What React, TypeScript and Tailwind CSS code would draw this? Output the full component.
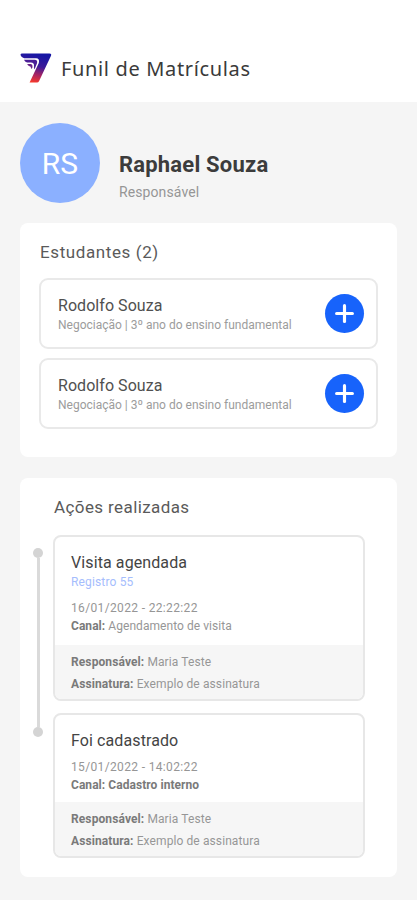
import { Plus } from 'lucide-react';

interface Student {
  id: number;
  name: string;
  info: string;
}

interface Action {
  id: number;
  title: string;
  record?: string;
  date: string;
  channel: string;
  strongChannel?: boolean;
  owner: string;
  signature: string;
}

const students: Student[] = [
  { id: 1, name: 'Rodolfo Souza', info: 'Negociação | 3º ano do ensino fundamental' },
  { id: 2, name: 'Rodolfo Souza', info: 'Negociação | 3º ano do ensino fundamental' },
];

const actions: Action[] = [
  {
    id: 1,
    title: 'Visita agendada',
    record: 'Registro 55',
    date: '16/01/2022 - 22:22:22',
    channel: 'Agendamento de visita',
    owner: 'Maria Teste',
    signature: 'Exemplo de assinatura',
  },
  {
    id: 2,
    title: 'Foi cadastrado',
    date: '15/01/2022 - 14:02:22',
    channel: 'Cadastro interno',
    strongChannel: true,
    owner: 'Maria Teste',
    signature: 'Exemplo de assinatura',
  },
];

function Logo() {
  return (
    <svg width="32" height="30" viewBox="0 0 32 30" fill="none">
      <defs>
        <linearGradient id="logo" x1="20" y1="2" x2="14" y2="30" gradientUnits="userSpaceOnUse">
          <stop offset="0" stopColor="#1616a4" />
          <stop offset="0.4" stopColor="#3d1a98" />
          <stop offset="0.7" stopColor="#a82462" />
          <stop offset="1" stopColor="#fb3a28" />
        </linearGradient>
      </defs>
      <path d="M2 0.5H29.5Q31.8 0.5 31 2.8L19 28.2Q18.4 29.5 17 29.5H9.6L18.8 10Q20 5.4 16 5.2H4.2Q0.8 4.2 0.5 1.5Q0.8 0.5 2 0.5Z" fill="url(#logo)" />
      <path d="M4 6.7H14.6Q18 7 17 10.2L14.6 16.2Q13.6 15.4 14 13.2Q14.4 9.6 10.8 9.5H7Q4.8 9 4 6.7Z" fill="#4a1d96" />
      <path d="M7.2 11H10.4Q13 11.2 12.4 14.4Q12 15.6 11.2 15.8Q11.2 13.2 9 13.1Q7.8 12.5 7.2 11Z" fill="#6a2488" />
    </svg>
  );
}

function StudentCard({ student }: { student: Student }) {
  return (
    <div className="flex h-[71px] items-center justify-between rounded-[9px] border-2 border-[#e9e9e9] pl-[17px] pr-3">
      <div className="whitespace-nowrap pt-[2px]">
        <p className="text-[16px] leading-5 tracking-[0.05px] text-[#505050]">{student.name}</p>
        <p className="text-[12px] leading-[18px] text-[#9c9c9c]">{student.info}</p>
      </div>
      <button className="flex h-[39px] w-[39px] items-center justify-center rounded-full bg-[#1763fb] text-white">
        <Plus className="h-[27px] w-[27px]" strokeWidth={2.8} />
      </button>
    </div>
  );
}

function ActionCard({ action }: { action: Action }) {
  return (
    <div className="overflow-hidden whitespace-nowrap rounded-[8px] border-2 border-[#e7e7e7] text-[12px] text-[#969696]">
      <div className={`px-4 pt-[15px] ${action.record ? 'h-[108px]' : 'h-[87px]'}`}>
        <h3 className="text-[16px] leading-[22px] tracking-[0.1px] text-[#444444]">{action.title}</h3>
        {action.record && <p className="leading-4 tracking-[0.15px] text-[#a5bdfd]">{action.record}</p>}
        <p className={`leading-[18px] tracking-[0.35px] ${action.record ? 'mt-[9px]' : 'mt-[6px]'}`}>{action.date}</p>
        <p className="leading-[18px] tracking-[0.05px]">
          <span className="font-bold text-[#7a7a7a]">Canal:</span>{' '}
          <span className={action.strongChannel ? 'font-bold text-[#7a7a7a]' : ''}>{action.channel}</span>
        </p>
      </div>
      <div className="h-[54px] bg-[#f6f6f6] px-4 pt-[6px] leading-[22px] tracking-[0.1px]">
        <p><span className="font-bold text-[#7a7a7a]">Responsável:</span> {action.owner}</p>
        <p><span className="font-bold text-[#7a7a7a]">Assinatura:</span> {action.signature}</p>
      </div>
    </div>
  );
}

export default function App() {
  return (
    <div className="h-[900px] w-[417px] overflow-hidden bg-[#f5f5f5] font-['Roboto',sans-serif]">
      <header className="flex h-[102px] items-start gap-[9px] bg-white pl-5 pt-[53px]">
        <Logo />
        <h1 className="whitespace-nowrap font-['Noto_Sans',sans-serif] text-[20px] leading-8 tracking-[0.65px] text-[#3a3a3a]">Funil de Matrículas</h1>
      </header>

      <main className="px-5 pt-[21px]">
        <div className="flex h-20 gap-[19px]">
          <div className="flex h-20 w-20 items-center justify-center rounded-full bg-[#8bb0ff] text-[30px] text-white">RS</div>
          <div className="whitespace-nowrap pt-7">
            <h2 className="text-[22px] font-bold leading-7 tracking-[0.2px] text-[#3c3c3c]">Raphael Souza</h2>
            <p className="mt-px text-[14px] leading-6 tracking-[0.1px] text-[#969696]">Responsável</p>
          </div>
        </div>

        {/* Students */}
        <section className="mt-5 h-[234px] rounded-[8px] bg-white px-[19px] pt-[17px]">
          <h2 className="pl-px text-[17px] leading-6 tracking-[0.6px] text-[#5a5a5a]">Estudantes (2)</h2>
          <div className="mt-[14px] flex flex-col gap-[9px]">
            {students.map(s => (
              <StudentCard key={s.id} student={s} />
            ))}
          </div>
        </section>

        {/* Timeline */}
        <section className="mt-[21px] h-[399px] rounded-[8px] bg-white pl-[13px] pr-8 pt-[17px]">
          <h2 className="pl-[21px] text-[17px] leading-6 tracking-[0.4px] text-[#5a5a5a]">Ações realizadas</h2>
          <div className="mt-4 flex gap-[10px]">
            <div className="mt-[13px] flex h-[189px] w-[10px] flex-col items-center">
              <span className="h-[10px] w-[10px] shrink-0 rounded-full bg-[#d4d4d4]" />
              <span className="w-[3px] flex-1 bg-[#dadada]" />
              <span className="h-[10px] w-[10px] shrink-0 rounded-full bg-[#d4d4d4]" />
            </div>
            <div className="flex w-[312px] flex-col gap-[12px]">
              {actions.map(a => (
                <ActionCard key={a.id} action={a} />
              ))}
            </div>
          </div>
        </section>
      </main>
    </div>
  );
}
